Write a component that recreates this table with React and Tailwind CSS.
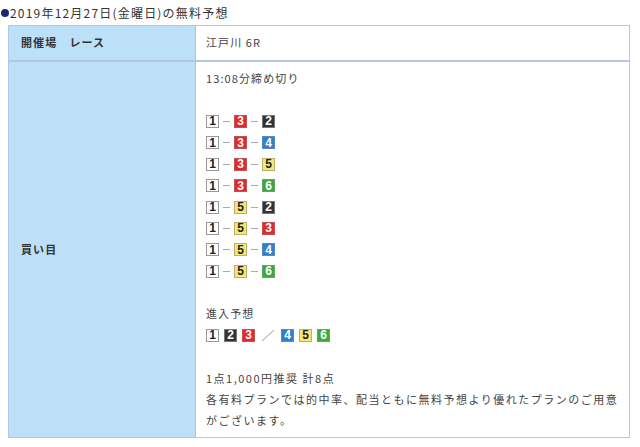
import React from "react";

const COLORS = {
  1: "bg-white text-[#222] border-[#999]",
  2: "bg-[#333] text-white border-[#777]",
  3: "bg-[#e8272c] text-white border-[#b55]",
  4: "bg-[#2f7fd1] text-white border-[#5a8ac0]",
  5: "bg-[#f2e874] text-[#222] border-[#b9b070]",
  6: "bg-[#3ea83e] text-white border-[#6aa36a]",
};

function Badge({ n }) {
  return (
    <span
      className={`inline-flex items-center justify-center w-[13px] h-[13px] border text-[12px] leading-none font-bold tracking-normal ${COLORS[n]}`}
      style={{ fontFamily: '"Liberation Sans", Arial, sans-serif' }}
    >
      {n}
    </span>
  );
}

function Combo({ a }) {
  return (
    <div className="flex items-center h-[21.4px]">
      <Badge n={a[0]} />
      <span className="w-[7px] h-px bg-[#aaa] mx-[4px]" />
      <Badge n={a[1]} />
      <span className="w-[7px] h-px bg-[#aaa] mx-[4px]" />
      <Badge n={a[2]} />
    </div>
  );
}

const combos = [
  [1, 3, 2],
  [1, 3, 4],
  [1, 3, 5],
  [1, 3, 6],
  [1, 5, 2],
  [1, 5, 3],
  [1, 5, 4],
  [1, 5, 6],
];

export default function App() {
  return (
    <div
      className="w-[640px] h-[447px] bg-white text-[#333] pt-[4px]"
      style={{ fontFamily: '"Noto Sans CJK JP", "Noto Sans", sans-serif' }}
    >
      <div className="flex items-center h-[18px] pl-[1px] text-[12px] tracking-[0.1em] text-[#333]">
        <span className="inline-block w-[8px] h-[8px] rounded-full bg-[#1b2a6b] mr-[1px]" />
        <span>2019年12月27日(金曜日)の無料予想</span>
      </div>
      <div className="mt-[3px] ml-[8px] w-[622px] border border-[#b3c6e6] text-[11px] tracking-[0.1em] leading-[21.4px]">
        <div className="flex h-[36px] border-b-2 border-[#b3c6e6]">
          <div className="w-[187px] shrink-0 bg-[#bde0f9] border-r border-[#a9c3e3] flex items-center pl-[12px] font-bold text-[#333]">
            開催場　レース
          </div>
          <div className="flex-1 flex items-center pl-[10px] text-[#444]">江戸川 6R</div>
        </div>
        <div className="flex">
          <div className="w-[187px] shrink-0 bg-[#bde0f9] border-r border-[#a9c3e3] flex items-center pl-[12px] font-bold text-[#333]">
            買い目
          </div>
          <div className="flex-1 pl-[10px] pr-[8px] pt-[6px] pb-[5px] text-[#444]">
            <div>13:08分締め切り</div>
            <div className="h-[21.4px]" />
            {combos.map((c, i) => (
              <Combo key={i} a={c} />
            ))}
            <div className="h-[21.4px]" />
            <div>進入予想</div>
            <div className="flex items-center h-[21.4px] gap-[5px]">
              <Badge n={1} />
              <Badge n={2} />
              <Badge n={3} />
              <svg width="14" height="13" viewBox="0 0 14 13" className="mx-[1px]">
                <line x1="1" y1="12" x2="13" y2="1" stroke="#999" strokeWidth="1" />
              </svg>
              <Badge n={4} />
              <Badge n={5} />
              <Badge n={6} />
            </div>
            <div className="h-[21.4px]" />
            <div className="tracking-[1.5px]">1点1,000円推奨 計8点</div>
            <div className="tracking-[1.5px]">各有料プランでは的中率、配当ともに無料予想より優れたプランのご用意がございます。</div>
          </div>
        </div>
      </div>
    </div>
  );
}
